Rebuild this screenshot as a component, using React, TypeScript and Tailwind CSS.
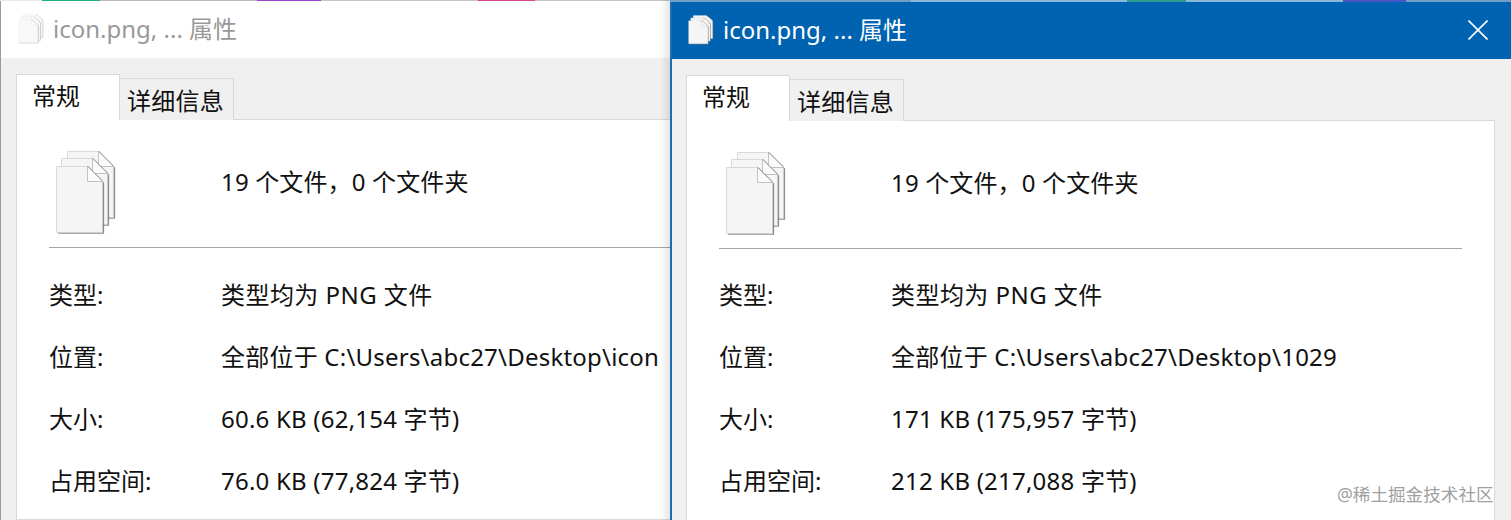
const font = { fontFamily: '"Noto Sans", "Noto Sans CJK SC", sans-serif' };

function Files({ className }: { className: string }) {
  const page = "M0 0H31L46 15V66H0Z";
  const fold = "M31 0V15H46Z";
  const layer = (x: number, y: number) => (
    <g transform={`translate(${x} ${y})`}>
      <path d={page} transform="translate(1.6 1.2)" fill="#6f6f6f" opacity="0.8" filter="url(#soft)" />
      <path d={page} fill="#f5f5f5" stroke="#d2d2d2" strokeWidth="0.8" />
      <path d="M31 0L46 15" fill="none" stroke="#9a9a9a" strokeWidth="1.6" />
      <path d={fold} fill="#fbfbfb" stroke="#b4b4b4" strokeWidth="0.8" strokeLinejoin="round" />
    </g>
  );
  return (
    <svg viewBox="0 0 62 86" preserveAspectRatio="none" className={className}>
      <defs>
        <filter id="soft" x="-10%" y="-10%" width="120%" height="120%">
          <feGaussianBlur stdDeviation="0.7" />
        </filter>
      </defs>
      {layer(12.5, 1.5)}
      {layer(6.5, 8.5)}
      {layer(1.5, 16.5)}
    </svg>
  );
}

function Row({ label, value, wide }: { label: string; value: string; wide?: boolean }) {
  return (
    <div className="flex h-[62px] items-center whitespace-nowrap">
      <div className="w-[172px] shrink-0">{label}</div>
      <div className={wide ? "tracking-[0.45px]" : "tracking-[0.22px]"}>{value}</div>
    </div>
  );
}

function PropWindow({
  active,
  size,
  location,
  disk,
  sepWidth,
  width,
}: {
  active: boolean;
  size: string;
  location: string;
  disk: string;
  sepWidth: string;
  width: string;
}) {
  return (
    <div className={`flex h-full shrink-0 flex-col overflow-hidden ${width} ${active ? "border-l-2 border-l-[#1b6cb0]" : ""}`}>
      <div
        className={`flex h-[57px] shrink-0 items-center pb-[1px] text-[24px] ${
          active ? "bg-[#0063b1] pl-[16px] text-white" : "bg-white pl-[17px] text-[#999999]"
        }`}
      >
        <Files className={`h-[30px] w-[26px] shrink-0 ${active ? "" : "opacity-60"}`} />
        <span className="ml-[9px] flex-1 whitespace-nowrap">icon.png, ... 属性</span>
        {active && (
          <svg viewBox="0 0 20 20" className="mr-[23px] h-[20px] w-[20px] shrink-0" fill="none" stroke="#ffffff" strokeWidth="1.6">
            <path d="M0.5 0.5L19.5 19.5M19.5 0.5L0.5 19.5" />
          </svg>
        )}
      </div>
      <div className={`flex min-h-0 flex-1 flex-col bg-[#f0f0f0] pr-[16px] pt-[16px] text-[24px] text-[#111111] ${active ? "pl-[14px]" : "pl-[15px]"}`}>
        <div className="relative z-10 flex h-[46px] shrink-0 items-end">
          <div className="flex h-[46px] w-[104px] justify-start border border-b-0 border-[#d9d9d9] bg-white pl-[15px] pt-[1px] leading-[40px]">
            常规
          </div>
          <div className="flex h-[42px] w-[114px] items-center justify-center border border-b-0 border-l-0 border-[#d9d9d9] bg-[#f0f0f0] pr-[2px] pt-[2px] tracking-[0.3px]">
            详细信息
          </div>
        </div>
        <div className={`-mt-px min-h-0 flex-1 border border-[#d9d9d9] bg-white pl-[32px] ${active ? "" : "mr-[-60px]"}`}>
          <div className="flex h-[127px] items-start">
            <div className="w-[172px] shrink-0 pl-[6px] pt-[30px]">
              <Files className="h-[86px] w-[62px]" />
            </div>
            <div className="whitespace-nowrap pt-[44px] tracking-[0.15px]">19 个文件，0 个文件夹</div>
          </div>
          <div className={`h-px bg-[#a5a5a5] ${sepWidth}`} />
          <div className={active ? "pt-[15px]" : "pt-[16px]"}>
            <Row label="类型:" value="类型均为 PNG 文件" wide />
            <Row label="位置:" value={location} />
            <Row label="大小:" value={size} />
            <Row label="占用空间:" value={disk} />
          </div>
        </div>
      </div>
    </div>
  );
}

function StripLeft() {
  return (
    <div className="flex h-px shrink-0">
      <div className="w-[42px] bg-[#e8e8e8]" />
      <div className="w-[58px] bg-[#1fb184]" />
      <div className="w-[157px] bg-[#b8b8b8]" />
      <div className="w-[64px] bg-[#9a45d0]" />
      <div className="w-[157px] bg-[#c4c4c4]" />
      <div className="w-[57px] bg-[#d9488f]" />
      <div className="w-[135px] bg-[#c4c4c4]" />
    </div>
  );
}

function StripRight() {
  return (
    <div className="flex h-[2px] shrink-0">
      <div className="w-[241px] bg-[#6f9fc4]" />
      <div className="w-[216px] bg-[#8ab8d8]" />
      <div className="w-[59px] bg-[#2f9a90]" />
      <div className="w-[157px] bg-[#8ab8d8]" />
      <div className="w-[63px] bg-[#4a55c8]" />
      <div className="w-[105px] bg-[#6f9fc4]" />
    </div>
  );
}

export default function App() {
  return (
    <div className="relative h-[520px] w-[1511px] overflow-hidden bg-white" style={font}>
      <div className="flex h-full">
        <div className="relative flex h-full w-[670px] shrink-0 flex-col overflow-hidden">
          <StripLeft />
          <div className="min-h-0 flex-1 border-l border-l-[#9a9a9a]">
            <PropWindow active={false} width="w-[720px]" sepWidth="w-[700px]" location="全部位于 C:\Users\abc27\Desktop\icon" size="60.6 KB (62,154 字节)" disk="76.0 KB (77,824 字节)" />
          </div>
          <div className="absolute bottom-0 right-0 top-0 w-[10px] bg-linear-to-r from-transparent to-black/10" />
        </div>
        <div className="flex h-full w-[841px] shrink-0 flex-col overflow-hidden">
          <StripRight />
          <PropWindow active width="w-[841px]" sepWidth="w-[743px]" location="全部位于 C:\Users\abc27\Desktop\1029" size="171 KB (175,957 字节)" disk="212 KB (217,088 字节)" />
        </div>
      </div>
      <div className="absolute left-[1337px] top-[481px] whitespace-nowrap text-[17.6px] text-[#a0a0a0]">@稀土掘金技术社区</div>
    </div>
  );
}
